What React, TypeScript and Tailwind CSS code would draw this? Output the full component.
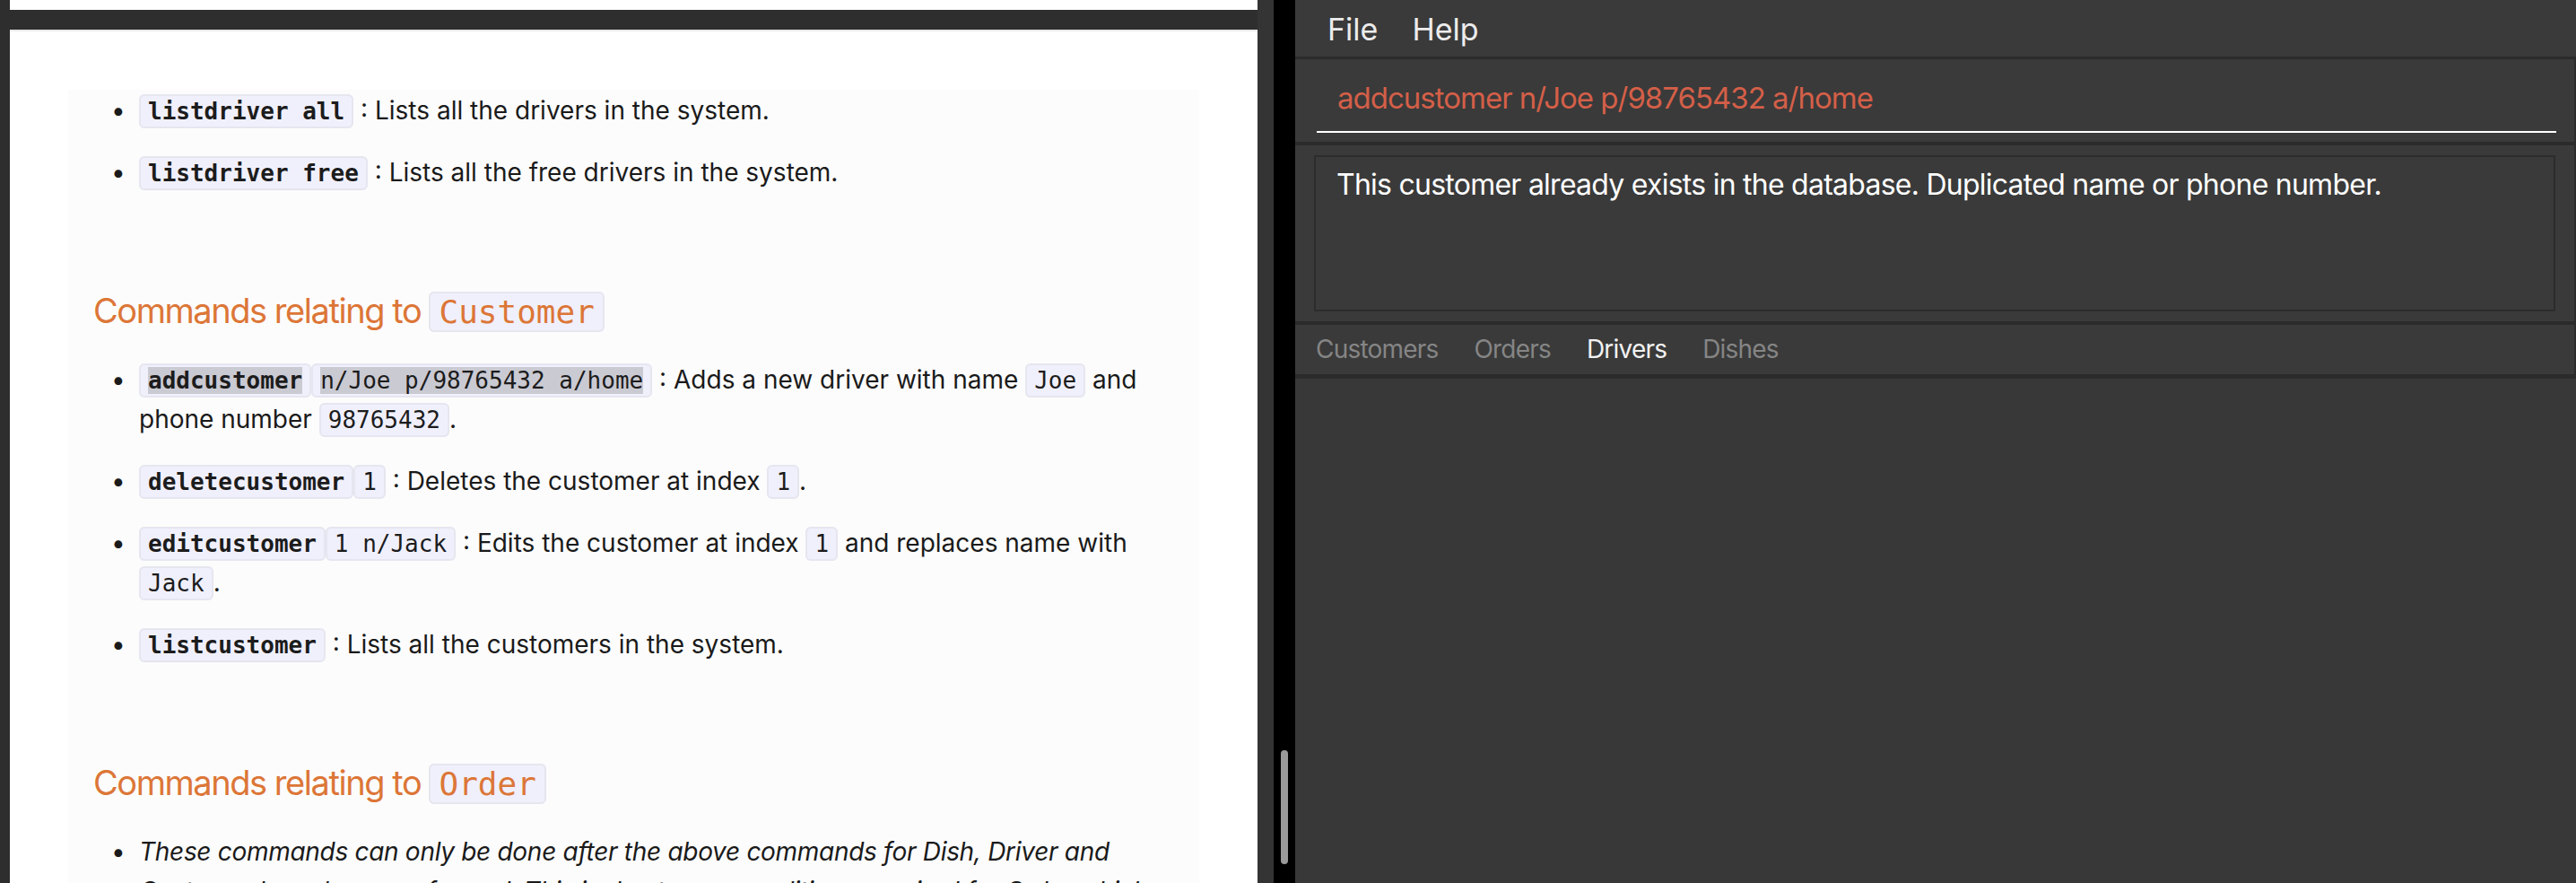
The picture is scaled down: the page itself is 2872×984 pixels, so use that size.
import type { ReactNode } from 'react';

const sans = "font-['Inter','Noto_Sans',sans-serif]";

function Code({ children, bold, hl }: { children: ReactNode; bold?: boolean; hl?: boolean }) {
  return (
    <code
      className={`rounded-[6px] border-2 border-[#e6e6f0] bg-[#f0f0fc] px-[8px] py-[2px] font-['DejaVu_Sans_Mono',monospace] text-[26px] leading-none text-[#1c1c1c] ${bold ? 'font-bold' : 'font-normal'}`}
    >
      {hl ? <span className="bg-[#cacad3]">{children}</span> : children}
    </code>
  );
}

function Item({ children, italic }: { children: ReactNode; italic?: boolean }) {
  return (
    <li className="flex">
      <span className="w-[31px] shrink-0">•</span>
      <div className={italic ? 'italic tracking-[-0.3px]' : ''}>{children}</div>
    </li>
  );
}

function Heading({ label }: { label: string }) {
  return (
    <h3 className="mt-[104px] h-[56px] text-[38px] font-normal leading-[56px] tracking-[-1.45px] text-[#dc7637]">
      Commands relating to{' '}
      <code className="rounded-[6px] border-2 border-[#e6e6f0] bg-[#f0f0fc] px-[9px] font-['DejaVu_Sans_Mono',monospace] text-[36px] leading-none tracking-normal">
        {label}
      </code>
    </h3>
  );
}

function DocPane() {
  return (
    <div className="flex w-[1391px] flex-col">
      <div className="h-[11px] bg-white" />
      <div className="h-[24px] border-b-2 border-[#e9e9e9] bg-[#2e2e2e]" />
      <div className={`flex-1 overflow-hidden bg-white px-[65px] pt-[65px] ${sans}`}>
        <div className="h-full bg-[#fcfcfc] pl-[28px] pr-[48px] pt-[1px] text-[28px] leading-[44px] text-[#1a1a1a]">
          <ul className="flex flex-col gap-[25px] pl-[20px]">
            <Item>
              <Code bold>listdriver all</Code> : Lists all the drivers in the system.
            </Item>
            <Item>
              <Code bold>listdriver free</Code> : Lists all the free drivers in the system.
            </Item>
          </ul>

          <Heading label="Customer" />

          <ul className="mt-[27px] flex flex-col gap-[25px] pl-[20px]">
            <Item>
              <Code bold hl>addcustomer</Code>
              <Code hl>n/Joe p/98765432 a/home</Code> : Adds a new driver with name <Code>Joe</Code> and
              phone number <Code>98765432</Code>.
            </Item>
            <Item>
              <Code bold>deletecustomer</Code>
              <Code>1</Code> : Deletes the customer at index <Code>1</Code>.
            </Item>
            <Item>
              <Code bold>editcustomer</Code>
              <Code>1 n/Jack</Code> : Edits the customer at index <Code>1</Code> and replaces name with{' '}
              <Code>Jack</Code>.
            </Item>
            <Item>
              <Code bold>listcustomer</Code> : Lists all the customers in the system.
            </Item>
          </ul>

          <Heading label="Order" />

          <ul className="mt-[27px] flex flex-col gap-[25px] pl-[20px]">
            <Item italic>
              These commands can only be done after the above commands for Dish, Driver and Customer have been
              performed. This is due to pre-conditions required for Order which needs them.
            </Item>
          </ul>
        </div>
      </div>
    </div>
  );
}

function AppPane() {
  const tabs = ['Customers', 'Orders', 'Drivers', 'Dishes'];
  return (
    <div className={`flex w-[1428px] flex-col bg-[#3a3a3a] ${sans}`}>
      {/* menu bar */}
      <div className="flex h-[63px] gap-[38px] pl-[36px] pt-[16px] text-[34px] leading-none text-[#ececec]">
        <span>File</span>
        <span>Help</span>
      </div>
      <div className="h-[3px] bg-[#2b2b2b]" />

      {/* command box */}
      <div className="h-[92px] border-r-2 border-[#2b2b2b] pl-[24px] pr-[20px] pt-[27px]">
        <div className="border-b-2 border-white pb-[20px] pl-[23px] text-[33px] leading-none tracking-[-1px] text-[#d45f48]">
          addcustomer n/Joe p/98765432 a/home
        </div>
      </div>
      <div className="h-[4px] bg-[#2b2b2b]" />

      {/* result display */}
      <div className="h-[196px] border-r-2 border-[#2b2b2b] px-[21px] pt-[11px]">
        <div className="h-[174px] border-2 border-[#2c2c2c] pl-[23px] pt-[15px] text-[32px] leading-none tracking-[-0.75px] text-white">
          This customer already exists in the database. Duplicated name or phone number.
        </div>
      </div>
      <div className="h-[4px] bg-[#2b2b2b]" />

      {/* tabs */}
      <div className="flex h-[55px] gap-[40px] border-r-2 border-[#2b2b2b] pl-[23px] pt-[13px] text-[28px] leading-none tracking-[-0.8px]">
        {tabs.map((t) => (
          <span key={t} className={t === 'Drivers' ? 'text-[#f2f2f2]' : 'text-[#858585]'}>
            {t}
          </span>
        ))}
      </div>
      <div className="h-[5px] bg-[#2b2b2b]" />

      {/* list */}
      <div className="flex-1 bg-[#383838]" />
    </div>
  );
}

export default function App() {
  return (
    <div className="flex h-[984px] w-[2872px] overflow-hidden bg-[#2e2e2e]">
      <div className="w-[11px] bg-[#2e2e2e]" />
      <DocPane />
      <div className="w-[18px] bg-[#343434]" />
      <div className="relative w-[24px] bg-black">
        <div className="absolute left-[8px] top-[836px] h-[127px] w-[8px] rounded-full bg-[#9a9a9a]" />
      </div>
      <AppPane />
    </div>
  );
}
